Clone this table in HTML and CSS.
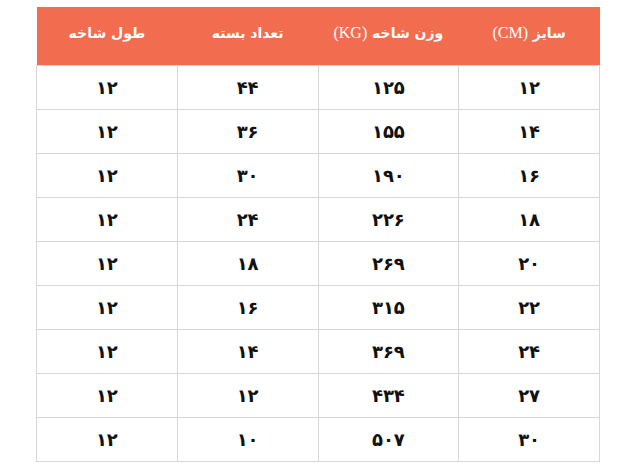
FILE: index.html
```html
<!DOCTYPE html>
<html lang="fa" dir="rtl">
<head>
<meta charset="utf-8">
<link rel="stylesheet" href="styles.css">
</head>
<body>
<table class="spec">
  <thead>
    <tr>
      <th>سایز <span class="lat">(CM)</span></th>
      <th>وزن شاخه <span class="lat">(KG)</span></th>
      <th>تعداد بسته</th>
      <th>طول شاخه</th>
    </tr>
  </thead>
  <tbody>
    <tr><td>۱۲</td><td>۱۲۵</td><td>۴۴</td><td>۱۲</td></tr>
    <tr><td>۱۴</td><td>۱۵۵</td><td>۳۶</td><td>۱۲</td></tr>
    <tr><td>۱۶</td><td>۱۹۰</td><td>۳۰</td><td>۱۲</td></tr>
    <tr><td>۱۸</td><td>۲۲۶</td><td>۲۴</td><td>۱۲</td></tr>
    <tr><td>۲۰</td><td>۲۶۹</td><td>۱۸</td><td>۱۲</td></tr>
    <tr><td>۲۲</td><td>۳۱۵</td><td>۱۶</td><td>۱۲</td></tr>
    <tr><td>۲۴</td><td>۳۶۹</td><td>۱۴</td><td>۱۲</td></tr>
    <tr><td>۲۷</td><td>۴۳۴</td><td>۱۲</td><td>۱۲</td></tr>
    <tr><td>۳۰</td><td>۵۰۷</td><td>۱۰</td><td>۱۲</td></tr>
  </tbody>
</table>
</body>
</html>
```
FILE: styles.css
```css
html, body {
  margin: 0;
  padding: 0;
  background: #ffffff;
}
body {
  padding: 7px 35px 0 36px;
  font-family: "DejaVu Sans", "Noto Sans", sans-serif;
}
.spec {
  width: 564px;
  border-collapse: collapse;
  table-layout: fixed;
  direction: rtl;
}
.spec th {
  background: #f26c4f;
  color: #ffffff;
  font-weight: bold;
  font-size: 14px;
  height: 52px;
  padding: 0 4px 6px;
  text-align: center;
  border: none;
}
.spec th .lat {
  font-family: "Liberation Serif", serif;
  font-size: 16px;
  font-weight: normal;
}
.spec td {
  height: 43px;
  padding: 0;
  text-align: center;
  border: 1px solid #d6d6d6;
  color: #111111;
  font-weight: bold;
  font-size: 18px;
  letter-spacing: 2px;
}
```
